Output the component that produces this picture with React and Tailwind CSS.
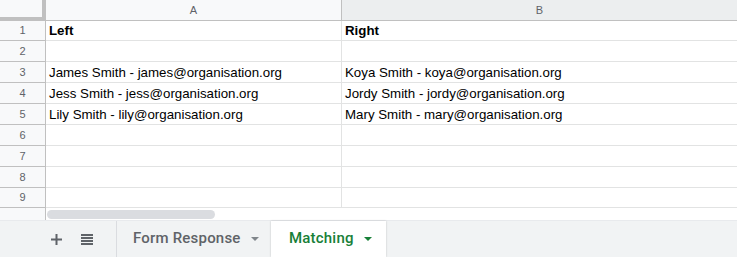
import React from 'react';

const rows = [
  { n: 1, a: 'Left', b: 'Right', bold: true, h: 'h-[20px]' },
  { n: 2, a: '', b: '', h: 'h-[21px]' },
  { n: 3, a: 'James Smith - james@organisation.org', b: 'Koya Smith - koya@organisation.org', h: 'h-[21px]' },
  { n: 4, a: 'Jess Smith - jess@organisation.org', b: 'Jordy Smith - jordy@organisation.org', h: 'h-[21px]' },
  { n: 5, a: 'Lily Smith - lily@organisation.org', b: 'Mary Smith - mary@organisation.org', h: 'h-[21px]' },
  { n: 6, a: '', b: '', h: 'h-[21px]' },
  { n: 7, a: '', b: '', h: 'h-[21px]' },
  { n: 8, a: '', b: '', h: 'h-[21px]' },
  { n: 9, a: '', b: '', h: 'h-[20px]' },
];

const Caret = ({ color }) => (
  <svg width="8" height="4" viewBox="0 0 8 4" className="ml-[10px]">
    <path d="M0 0 L8 0 L4 4 Z" fill={color} />
  </svg>
);

export default function App() {
  return (
    <div className="w-[737px] h-[257px] overflow-hidden bg-white flex flex-col font-['Liberation_Sans',Arial,sans-serif]">
      {/* column headers */}
      <div className="flex h-[21px] shrink-0">
        <div className="w-[46px] shrink-0 bg-[#f8f9fa] border-r-4 border-b-4 border-[#c0c0c0]" />
        <div className="w-[296px] shrink-0 bg-[#f8f9fa] border-r border-b border-[#c0c0c0] flex items-center justify-center text-[11px] text-[#5f6368]">
          A
        </div>
        <div className="flex-1 bg-[#eceeef] border-b border-[#c0c0c0] flex items-center justify-center text-[11px] text-[#5f6368]">
          B
        </div>
      </div>

      {/* rows */}
      {rows.map((r) => (
        <div key={r.n} className={`flex shrink-0 ${r.h}`}>
          <div className="w-[46px] shrink-0 bg-[#f8f9fa] border-r border-b border-[#c0c0c0] flex items-center justify-center text-[11px] text-[#5f6368]">
            {r.n}
          </div>
          <div className={`w-[296px] shrink-0 border-r border-b border-[#e2e3e3] flex items-end pl-[3px] pb-[2px] text-[13.3px] leading-[15px] text-black ${r.bold ? 'font-bold' : ''}`}>
            {r.a}
          </div>
          <div className={`flex-1 border-b border-[#e2e3e3] flex items-end pl-[3px] pb-[2px] text-[13.3px] leading-[15px] text-black ${r.bold ? 'font-bold' : ''}`}>
            {r.b}
          </div>
        </div>
      ))}

      {/* horizontal scrollbar */}
      <div className="flex h-[12px] shrink-0">
        <div className="w-[46px] shrink-0 bg-[#f8f9fa] border-r border-[#c0c0c0]" />
        <div className="flex-1 flex items-center pl-[1px]">
          <div className="w-[168px] h-[9px] rounded-full bg-[#dadce0]" />
        </div>
      </div>

      {/* sheet tabs */}
      <div className="flex-1 flex bg-[#f1f3f4] border-t border-[#e8eaed] font-['Roboto',sans-serif]">
        <div className="w-[117px] shrink-0 flex items-center border-r border-[#dadce0]">
          <svg width="11" height="11" viewBox="0 0 11 11" className="ml-[51px]">
            <rect x="0" y="4.5" width="11" height="2" fill="#5f6368" />
            <rect x="4.5" y="0" width="2" height="11" fill="#5f6368" />
          </svg>
          <svg width="12" height="11" viewBox="0 0 12 11" className="ml-[19px]">
            <rect x="0" y="0" width="12" height="2" fill="#5f6368" />
            <rect x="0" y="3" width="12" height="2" fill="#5f6368" />
            <rect x="0" y="6" width="12" height="2" fill="#5f6368" />
            <rect x="0" y="9" width="12" height="2" fill="#5f6368" />
          </svg>
        </div>
        <div className="w-[154px] shrink-0 flex items-center pl-[16px] pb-[1px] text-[15px] tracking-[0.2px] font-medium text-[#5f6368]">
          Form Response
          <Caret color="#80868b" />
        </div>
        <div className="w-[115px] shrink-0 bg-white flex items-center pl-[18px] pb-[1px] text-[15px] tracking-[0.2px] font-medium text-[#188038] shadow-[0_0_2px_rgba(0,0,0,0.2)]">
          Matching
          <Caret color="#188038" />
        </div>
      </div>
    </div>
  );
}
